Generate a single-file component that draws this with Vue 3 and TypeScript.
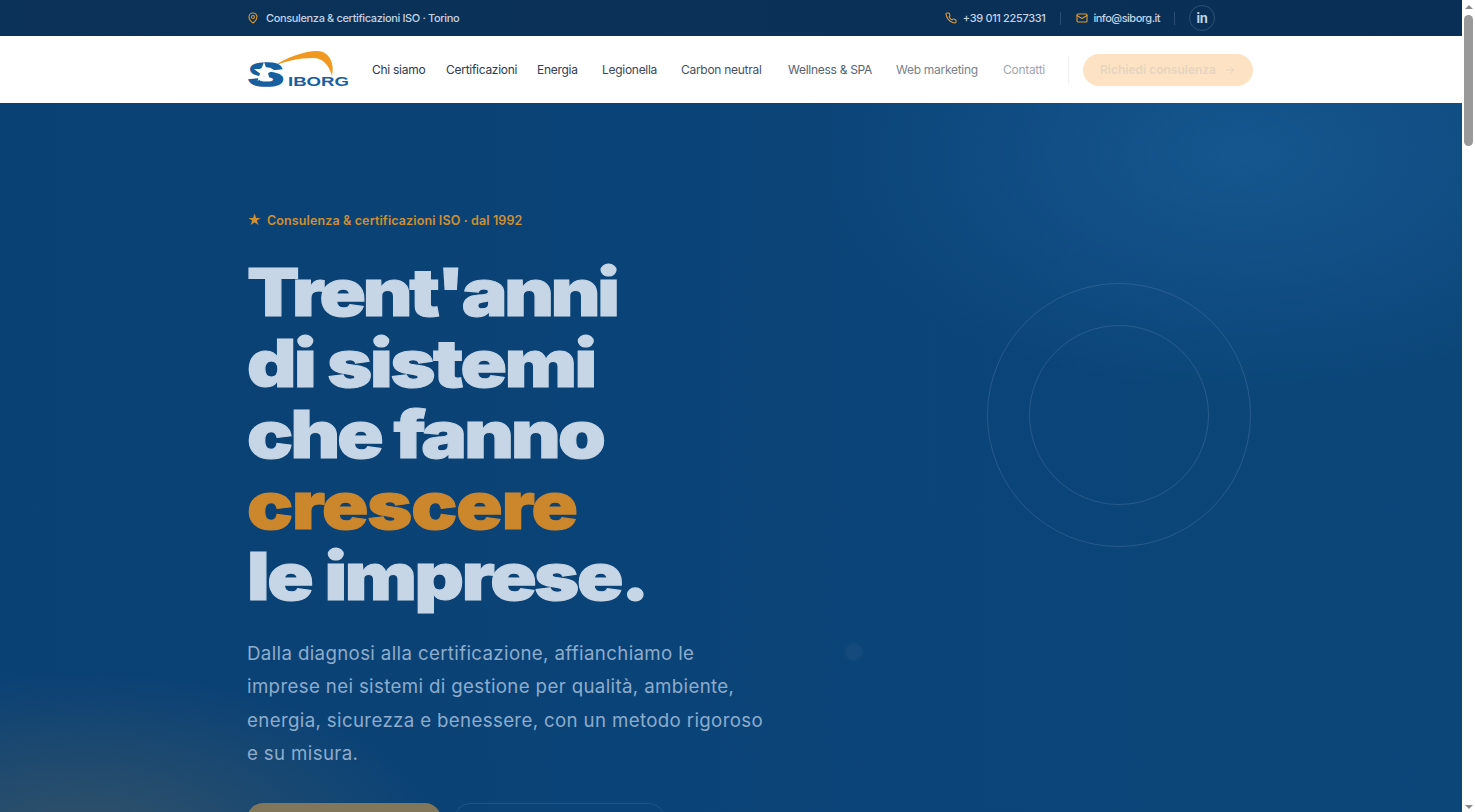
<script setup lang="ts">
const navLinks = [
  { label: 'Chi siamo', tone: '#2c3a4c', width: 74 },
  { label: 'Certificazioni', tone: '#2c3a4c', width: 91 },
  { label: 'Energia', tone: '#33404f', width: 65 },
  { label: 'Legionella', tone: '#3a4656', width: 79 },
  { label: 'Carbon neutral', tone: '#465261', width: 107 },
  { label: 'Wellness & SPA', tone: '#56616e', width: 108 },
  { label: 'Web marketing', tone: '#79828d', width: 107 },
  { label: 'Contatti', tone: '#a0a7af', width: 43 }
];

const headline = [
  { text: "Trent'anni", track: -2.8 },
  { text: 'di sistemi', track: -2.0 },
  { text: 'che fanno', track: -2.4 },
  { text: 'crescere', track: -0.9 },
  { text: 'le imprese.', track: -2.0 }
];

const leadLines = [
  'Dalla diagnosi alla certificazione, affianchiamo le',
  'imprese nei sistemi di gestione per qualità, ambiente,',
  'energia, sicurezza e benessere, con un metodo rigoroso',
  'e su misura.'
];
</script>

<template>
  <div class="shell">
    <div class="page">
      <div class="topbar">
        <div class="container topbar-row">
          <div class="top-left">
            <svg class="ico" viewBox="0 0 24 24" fill="none" stroke="#dd9a33" stroke-width="2.2" stroke-linecap="round" stroke-linejoin="round">
              <path d="M20 10c0 6-8 12-8 12s-8-6-8-12a8 8 0 0 1 16 0Z" />
              <circle cx="12" cy="10" r="3" />
            </svg>
            <span>Consulenza &amp; certificazioni ISO · Torino</span>
          </div>
          <div class="top-right">
            <span class="top-item">
              <svg class="ico" viewBox="0 0 24 24" fill="none" stroke="#dd9a33" stroke-width="2.2" stroke-linecap="round" stroke-linejoin="round">
                <path d="M22 16.92v3a2 2 0 0 1-2.18 2 19.8 19.8 0 0 1-8.63-3.07 19.5 19.5 0 0 1-6-6 19.8 19.8 0 0 1-3.07-8.67A2 2 0 0 1 4.11 2h3a2 2 0 0 1 2 1.72c.13.96.36 1.9.7 2.81a2 2 0 0 1-.45 2.11L8.09 9.91a16 16 0 0 0 6 6l1.27-1.27a2 2 0 0 1 2.11-.45c.91.34 1.85.57 2.81.7A2 2 0 0 1 22 16.92Z" />
              </svg>
              +39 011 2257331
            </span>
            <i class="sep sep-wide"></i>
            <span class="top-item top-mail">
              <svg class="ico" viewBox="0 0 24 24" fill="none" stroke="#dd9a33" stroke-width="2.2" stroke-linecap="round" stroke-linejoin="round">
                <rect x="2" y="4" width="20" height="16" rx="2" />
                <path d="m22 7-10 6L2 7" />
              </svg>
              info@siborg.it
            </span>
            <i class="sep"></i>
            <span class="linkedin">in</span>
          </div>
        </div>
      </div>

      <header class="navbar">
        <div class="container nav-row">
          <svg class="logo" viewBox="0 0 103 36">
            <path d="M25 16 C40 6 58 0 70 0 C82 0 88 12 85 25 C82 14 76 7 66 7 C52 7 38 10 25 16 Z" fill="#f0981f" />
            <text class="logo-s" x="1" y="34.5" textLength="36" lengthAdjust="spacingAndGlyphs">S</text>
            <path d="M17 11 L19.6 18 L27 18 L21 22.5 L23.4 30 L17 25.5 L10.6 30 L13 22.5 L7 18 L14.4 18 Z" fill="#fff" />
            <text class="logo-word" x="41" y="35" textLength="61" lengthAdjust="spacingAndGlyphs">IBORG</text>
          </svg>
          <nav class="nav-links">
            <a v-for="link in navLinks" :key="link.label" :style="{ color: link.tone, width: link.width + 'px' }">{{ link.label }}</a>
          </nav>
          <i class="nav-sep"></i>
          <a class="cta">
            Richiedi consulenza
            <svg class="cta-arrow" viewBox="0 0 24 24" fill="none" stroke="#e6d4bf" stroke-width="2" stroke-linecap="round" stroke-linejoin="round">
              <path d="M5 12h14M13 6l6 6-6 6" />
            </svg>
          </a>
        </div>
      </header>

      <section class="hero">
        <svg class="rings" viewBox="0 0 266 266" fill="none" stroke="#5c8ab1" stroke-opacity="0.32">
          <circle cx="133" cy="133" r="131.5" />
          <circle cx="133" cy="133" r="89.5" />
        </svg>
        <i class="dot"></i>
        <i class="glow"></i>
        <div class="container hero-body">
          <p class="eyebrow"><span class="star">★</span> Consulenza &amp; certificazioni ISO · dal 1992</p>
          <h1>
            <span
              v-for="line in headline"
              :key="line.text"
              :class="{ accent: line.text === 'crescere' }"
              :style="{ letterSpacing: line.track + 'px' }"
            >{{ line.text }}</span>
          </h1>
          <p class="lead">
            <span v-for="line in leadLines" :key="line">{{ line }}</span>
          </p>
          <div class="actions">
            <a class="btn-main">Richiedi consulenza</a>
            <a class="btn-ghost">Scopri i servizi</a>
          </div>
        </div>
      </section>
    </div>

    <aside class="scrollbar">
      <i class="arrow-up"></i>
      <i class="thumb"></i>
      <i class="arrow-down"></i>
    </aside>
  </div>
</template>

<style>
html, body {
  margin: 0;
  overflow: hidden;
  background: #fff;
}
</style>

<style scoped>
.shell {
  display: flex;
  height: 812px;
  overflow: hidden;
}

.page {
  flex: 1;
  min-width: 0;
  font-family: Inter, "Noto Sans", sans-serif;
}

.container {
  width: 968px;
  margin: 0 auto;
}

.scrollbar {
  flex: none;
  width: 13px;
  display: flex;
  flex-direction: column;
  align-items: center;
  background: #fff;
}

.arrow-up {
  margin-top: 5px;
  border-left: 4px solid transparent;
  border-right: 4px solid transparent;
  border-bottom: 4px solid #8b8b8b;
}

.thumb {
  margin-top: 6px;
  width: 9px;
  height: 131px;
  border-radius: 5px;
  background: #999;
}

.arrow-down {
  margin-top: auto;
  margin-bottom: 3px;
  border-left: 4px solid transparent;
  border-right: 4px solid transparent;
  border-top: 4px solid #8b8b8b;
}

.topbar {
  height: 36px;
  background: linear-gradient(90deg, #0b3259, #0a2f57);
  color: #c3d3e3;
  font-size: 11px;
  font-weight: 500;
  letter-spacing: -0.36px;
}

.topbar-row {
  height: 36px;
  display: flex;
  align-items: center;
  justify-content: space-between;
}

.top-left,
.top-right,
.top-item {
  display: flex;
  align-items: center;
}

.top-left {
  gap: 7px;
}

.top-item {
  gap: 6px;
}

.top-mail {
  gap: 5px;
  letter-spacing: -0.5px;
}

.ico {
  width: 12px;
  height: 12px;
}

.sep {
  width: 1px;
  height: 13px;
  background: #2a4d73;
  margin: 0 14px;
}

.sep-wide {
  margin: 0 15px;
}

.linkedin {
  width: 26px;
  height: 26px;
  border: 1px solid #2d5175;
  border-radius: 50%;
  display: flex;
  align-items: center;
  justify-content: center;
  font-size: 13px;
  font-weight: 700;
  box-sizing: border-box;
}

.navbar {
  height: 67px;
  background: #fff;
}

.nav-row {
  height: 67px;
  display: flex;
  align-items: center;
}

.logo {
  display: block;
  width: 103px;
  height: 36px;
  flex: none;
  margin: -1px 22px 0 0;
}

.logo-s {
  font-family: "Liberation Sans", sans-serif;
  font-size: 33px;
  font-weight: 700;
  fill: #17609f;
  stroke: #17609f;
  stroke-width: 1.6px;
}

.logo-word {
  font-family: "Liberation Sans", sans-serif;
  font-size: 13.5px;
  font-weight: 700;
  fill: #17609f;
}

.nav-links {
  display: flex;
  flex: none;
  font-size: 12px;
  letter-spacing: -0.28px;
  white-space: nowrap;
}

.nav-sep {
  flex: none;
  width: 1px;
  height: 27px;
  background: #eef0f2;
  margin: 0 14px 0 22px;
}

.cta {
  flex: none;
  width: 170px;
  height: 32px;
  border-radius: 16px;
  background: #fde3c4;
  color: #e6d4bf;
  font-size: 12px;
  font-weight: 600;
  display: flex;
  align-items: center;
  justify-content: center;
  gap: 8px;
}

.cta-arrow {
  width: 12px;
  height: 12px;
}

.hero {
  position: relative;
  height: 709px;
  overflow: hidden;
  background:
    radial-gradient(ellipse 420px 240px at 1240px 50px, rgba(28, 98, 158, 0.6), transparent),
    linear-gradient(90deg, #0a4175 0%, #0b4478 60%, #0c4679 100%);
}

.hero-body {
  position: relative;
  padding-top: 109px;
}

.rings {
  position: absolute;
  left: 986px;
  top: 179px;
  width: 266px;
  height: 266px;
}

.dot {
  position: absolute;
  left: 845px;
  top: 540px;
  width: 18px;
  height: 18px;
  border-radius: 50%;
  background: #2a5a88;
  opacity: 0.3;
  filter: blur(1px);
}

.glow {
  position: absolute;
  left: -280px;
  top: 570px;
  width: 720px;
  height: 330px;
  background: radial-gradient(closest-side, rgba(190, 140, 60, 0.22), transparent);
}

.eyebrow {
  margin: 0;
  font-size: 12.5px;
  line-height: 18px;
  font-weight: 600;
  letter-spacing: 0.12px;
  color: #d18f2f;
}

.star {
  font-size: 14px;
  line-height: 0;
  margin-right: 2px;
}

h1 {
  margin: 27px 0 0;
  font-size: 66px;
  line-height: 71px;
  font-weight: 900;
  color: #c6d6e6;
  -webkit-text-stroke: 1.1px currentColor;
}

h1 span {
  display: block;
  white-space: nowrap;
  transform: scaleX(1.16);
  transform-origin: left center;
}

h1 .accent {
  color: #cc872c;
}

.lead {
  margin: 25px 0 0;
  font-size: 18.7px;
  line-height: 33.4px;
  letter-spacing: 0.35px;
  color: #8eaccb;
}

.lead span {
  display: block;
  white-space: nowrap;
}

.actions {
  display: flex;
  gap: 13px;
  margin-top: 32px;
}

.btn-main,
.btn-ghost {
  height: 52px;
  border-radius: 16px;
  box-sizing: border-box;
  display: flex;
  align-items: center;
  justify-content: center;
  font-size: 14px;
  font-weight: 600;
}

.btn-main {
  width: 194px;
  background: #82775a;
  color: #e6dcc8;
}

.btn-ghost {
  width: 211px;
  border: 1px solid #1e5488;
  color: #8eaccb;
}
</style>
